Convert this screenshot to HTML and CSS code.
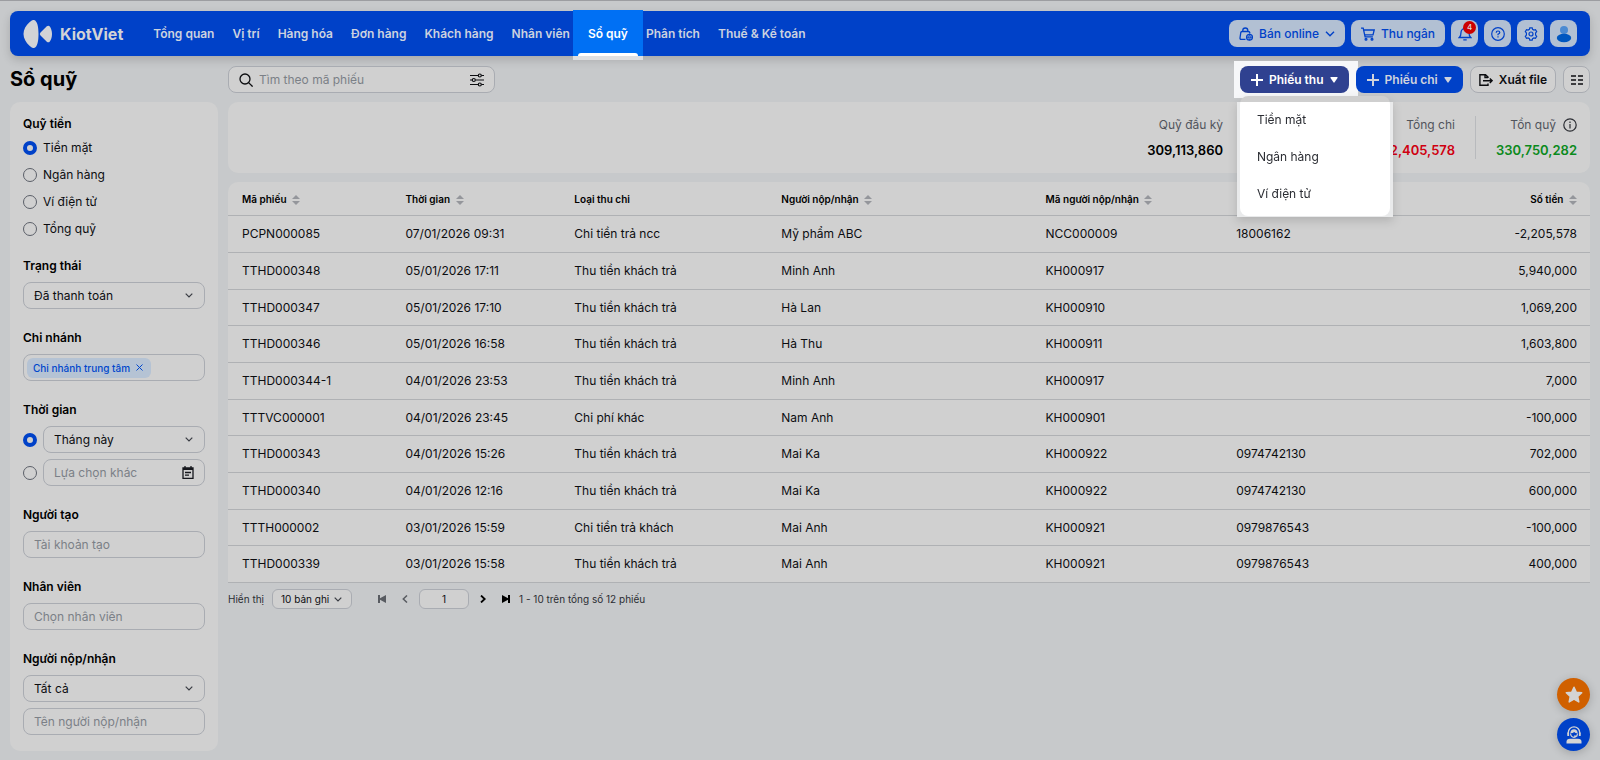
FILE: index.html
```html
<!DOCTYPE html>
<html lang="vi">
<head>
  <meta charset="UTF-8" />
  <meta name="viewport" content="width=device-width, initial-scale=1.0" />
  <title>KiotViet - Sổ quỹ</title>
  <link rel="stylesheet" href="styles.css">
</head>
<body>
  <!-- Shared icons -->
  <svg class="sprite" aria-hidden="true">
    <symbol id="sort" viewBox="0 0 8 12"><path d="M4 1l4 4H0zM4 11l4-4H0z" fill="#94969b"/></symbol>
    <symbol id="plus" viewBox="0 0 12 12"><path d="M6 0v12M0 6h12" fill="none" stroke="currentColor" stroke-width="2"/></symbol>
    <symbol id="caret" viewBox="0 0 8 6"><path d="M1 0h6q1 0 .5 1L4.600 5.300q-.6.7-1.200 0L.5 1Q0 0 1 0z" fill="currentColor"/></symbol>
  </svg>

  <header class="navbar">
    <a class="logo" href="#">
      <svg width="30" height="28" viewBox="0 0 30 28" fill="currentColor">
        <path d="M11 0c-1.500-.2-3 .8-4.500 2.300C3 5.500.5 9.500.5 14s2.500 8.500 6 11.700C8 27.200 9.500 28.200 11 28c3.500-1 4.500-7 4.500-14S14.500 1 11 0z"/>
        <path d="M17.500 12.500l6.300-6.200c1-.9 2.200-.9 3 .2C28.200 8.500 29 11 29 14s-.8 5.500-2.200 7.500c-.8 1.100-2 1.100-3 .2l-6.300-6.200q-1.500-1.500 0-3z"/>
      </svg>
      <span>KiotViet</span>
    </a>
    <nav class="menu">
      <a href="#">Tổng quan</a>
      <a href="#">Vị trí</a>
      <a href="#">Hàng hóa</a>
      <a href="#">Đơn hàng</a>
      <a href="#">Khách hàng</a>
      <a href="#">Nhân viên</a>
      <a href="#" class="active"><span>Sổ quỹ</span></a>
      <a href="#">Phân tích</a>
      <a href="#">Thuế &amp; Kế toán</a>
    </nav>
    <div class="nav-actions">
      <button class="nav-btn sell">
        <svg width="14" height="14" viewBox="0 0 14 14" fill="none" stroke="currentColor" stroke-width="1.300">
          <path d="M6.500 12.300H2.200Q.8 12.300 1 11l.8-5.500q.2-1 1.200-1h6.500q1 0 1.200 1l.2 1M3.800 4.500V3.500a2.500 2.500 0 0 1 5 0v1"/>
          <circle cx="10.500" cy="10.300" r="2.900"/><path d="M7.600 10.300h5.800M10.500 7.400q-2 2.900 0 5.800q2-2.900 0-5.800" stroke-width=".8"/>
        </svg>
        <span>Bán online</span>
        <svg width="10" height="6" viewBox="0 0 10 6" fill="none" stroke="currentColor" stroke-width="1.400"><path d="M1 .8l4 4 4-4"/></svg>
      </button>
      <button class="nav-btn cashier">
        <svg width="14" height="14" viewBox="0 0 14 14" fill="none" stroke="currentColor" stroke-width="1.300">
          <path d="M0 1.200h2.200l1.900 8.600h7.800M2.700 3h10.500l-1.200 4.800H3.700"/>
          <circle cx="5" cy="12.300" r=".9"/><circle cx="11" cy="12.300" r=".9"/>
        </svg>
        <span>Thu ngân</span>
      </button>
      <button class="nav-btn square" aria-label="Thông báo">
        <svg width="14" height="14" viewBox="0 0 14 14" fill="none" stroke="currentColor" stroke-width="1.300">
          <path d="M1.300 10.500h11.400Q11 9 11 5.500a4 4 0 0 0-8 0Q3 9 1.300 10.500zM5.300 12.800h3.400"/>
        </svg>
        <span class="badge">4</span>
      </button>
      <button class="nav-btn square" aria-label="Trợ giúp">
        <svg width="14" height="14" viewBox="0 0 14 14" fill="none" stroke="currentColor" stroke-width="1.200">
          <circle cx="7" cy="7" r="6.300"/><path d="M5.200 5.700Q5.200 4 7 4t1.800 1.500Q8.800 6.500 7 7.200v1M7 9.200v1.300"/>
        </svg>
      </button>
      <button class="nav-btn square" aria-label="Thiết lập">
        <svg width="14" height="14" viewBox="0 0 14 14" fill="none" stroke="currentColor" stroke-width="1.200">
          <path d="M5.800.8h2.400l.4 1.600 1.300.7 1.600-.4 1.200 2-1.100 1.200v2.200l1.100 1.200-1.200 2-1.600-.4-1.300.7-.4 1.600H5.800l-.4-1.600-1.300-.7-1.600.4-1.200-2 1.100-1.200V5.900L1.300 4.700l1.200-2 1.600.4 1.300-.7z"/>
          <circle cx="7" cy="7" r="2"/>
        </svg>
      </button>
      <button class="nav-btn square" aria-label="Tài khoản">
        <svg width="16" height="18" viewBox="0 0 16 18"><circle cx="8" cy="5" r="4" fill="#4b8ad2"/><ellipse cx="8" cy="13" rx="7.200" ry="4.200" fill="#0057c0"/></svg>
      </button>
    </div>
  </header>

  <div class="page">
    <h1>Sổ quỹ</h1>

    <div class="toolbar">
      <div class="search">
        <svg width="14" height="14" viewBox="0 0 14 14" fill="none" stroke="currentColor" stroke-width="1.300"><circle cx="6" cy="6" r="5"/><path d="M9.600 9.600l4 4"/></svg>
        <input type="text" placeholder="Tìm theo mã phiếu" aria-label="Tìm theo mã phiếu">
        <button class="icon-btn" aria-label="Bộ lọc">
          <svg width="14" height="14" viewBox="0 0 14 14" fill="none" stroke="currentColor" stroke-width="1.200">
            <path d="M0 2.500h8M11.500 2.500H14M0 7h2M5.500 7H14M0 11.500h8M11.500 11.500H14"/>
            <circle cx="9.800" cy="2.500" r="1.500"/><circle cx="3.800" cy="7" r="1.500"/><circle cx="9.800" cy="11.500" r="1.500"/>
          </svg>
        </button>
      </div>
      <div class="actions">
        <div class="receipt">
          <button class="btn receipt-btn">
            <svg width="12" height="12"><use href="#plus"/></svg>
            <span>Phiếu thu</span>
            <svg width="8" height="6"><use href="#caret"/></svg>
          </button>
          <div class="dropdown">
            <ul>
              <li><a href="#">Tiền mặt</a></li>
              <li><a href="#">Ngân hàng</a></li>
              <li><a href="#">Ví điện tử</a></li>
            </ul>
          </div>
        </div>
        <button class="btn payment-btn">
          <svg width="12" height="12"><use href="#plus"/></svg>
          <span>Phiếu chi</span>
          <svg width="8" height="6"><use href="#caret"/></svg>
        </button>
        <button class="btn outline">
          <svg width="14" height="12" viewBox="0 0 14 12" fill="none" stroke="currentColor" stroke-width="1.400">
            <path d="M9 4V3L6.500.7H.9v10.600H9V9.500M6 .7V3.500h3M4 6.700h9M10.800 4.400l2.300 2.300L10.800 9"/>
          </svg>
          <span>Xuất file</span>
        </button>
        <button class="btn outline columns" aria-label="Hiển thị cột">
          <svg width="12" height="10" viewBox="0 0 12 10" stroke="currentColor" stroke-width="1.400"><path d="M0 1h5M7 1h5M0 5h5M7 5h5M0 9h5M7 9h5"/></svg>
        </button>
      </div>
    </div>

    <aside class="filters">
      <section>
        <h2>Quỹ tiền</h2>
        <div class="radio-list">
          <label><input type="radio" name="fund" checked> Tiền mặt</label>
          <label><input type="radio" name="fund"> Ngân hàng</label>
          <label><input type="radio" name="fund"> Ví điện tử</label>
          <label><input type="radio" name="fund"> Tổng quỹ</label>
        </div>
      </section>
      <section>
        <h2><label for="status">Trạng thái</label></h2>
        <select id="status" class="field"><option>Đã thanh toán</option></select>
      </section>
      <section>
        <h2>Chi nhánh</h2>
        <div class="field tags">
          <span class="tag">Chi nhánh trung tâm
            <button class="icon-btn" aria-label="Bỏ chi nhánh"><svg width="7" height="7" viewBox="0 0 7 7" stroke="currentColor"><path d="M.5.5l6 6M6.500.5l-6 6"/></svg></button>
          </span>
        </div>
      </section>
      <section>
        <h2>Thời gian</h2>
        <div class="time-row">
          <input type="radio" name="time" aria-label="Theo tháng" checked>
          <select class="field" aria-label="Khoảng thời gian"><option>Tháng này</option></select>
        </div>
        <div class="time-row">
          <input type="radio" name="time" aria-label="Lựa chọn khác">
          <input type="text" class="field date" placeholder="Lựa chọn khác" aria-label="Lựa chọn khác">
        </div>
      </section>
      <section>
        <h2><label for="creator">Người tạo</label></h2>
        <input type="text" id="creator" class="field" placeholder="Tài khoản tạo">
      </section>
      <section>
        <h2><label for="staff">Nhân viên</label></h2>
        <input type="text" id="staff" class="field" placeholder="Chọn nhân viên">
      </section>
      <section>
        <h2><label for="payer">Người nộp/nhận</label></h2>
        <select id="payer" class="field"><option>Tất cả</option></select>
        <input type="text" class="field" placeholder="Tên người nộp/nhận" aria-label="Tên người nộp/nhận">
      </section>
    </aside>

    <main>
      <div class="summary">
        <div class="total opening"><span>Quỹ đầu kỳ</span><strong>309,113,860</strong></div>
        <div class="total"><span>Tổng chi</span><strong class="red">-2,405,578</strong></div>
        <div class="total">
          <span>Tồn quỹ
            <svg width="14" height="14" viewBox="0 0 14 14" fill="none" stroke="#2b2d33" stroke-width="1.200"><circle cx="7" cy="7" r="6.200"/><path d="M7 6v4.500M7 3.500V5"/></svg>
          </span>
          <strong class="green">330,750,282</strong>
        </div>
      </div>

      <table>
        <colgroup>
          <col class="c-code"><col class="c-time"><col class="c-type"><col class="c-name"><col class="c-id"><col>
          <col class="c-amount">
        </colgroup>
        <thead>
          <tr>
            <th>Mã phiếu <svg width="8" height="12"><use href="#sort"/></svg></th>
            <th>Thời gian <svg width="8" height="12"><use href="#sort"/></svg></th>
            <th>Loại thu chi</th>
            <th>Người nộp/nhận <svg width="8" height="12"><use href="#sort"/></svg></th>
            <th>Mã người nộp/nhận <svg width="8" height="12"><use href="#sort"/></svg></th>
            <th aria-label="Số điện thoại"></th>
            <th class="num">Số tiền <svg width="8" height="12"><use href="#sort"/></svg></th>
          </tr>
        </thead>
        <tbody>
          <tr><td>PCPN000085</td><td>07/01/2026 09:31</td><td>Chi tiền trả ncc</td><td>Mỹ phẩm ABC</td><td>NCC000009</td><td>18006162</td><td class="num">-2,205,578</td></tr>
          <tr><td>TTHD000348</td><td>05/01/2026 17:11</td><td>Thu tiền khách trả</td><td>Minh Anh</td><td>KH000917</td><td></td><td class="num">5,940,000</td></tr>
          <tr><td>TTHD000347</td><td>05/01/2026 17:10</td><td>Thu tiền khách trả</td><td>Hà Lan</td><td>KH000910</td><td></td><td class="num">1,069,200</td></tr>
          <tr><td>TTHD000346</td><td>05/01/2026 16:58</td><td>Thu tiền khách trả</td><td>Hà Thu</td><td>KH000911</td><td></td><td class="num">1,603,800</td></tr>
          <tr><td>TTHD000344-1</td><td>04/01/2026 23:53</td><td>Thu tiền khách trả</td><td>Minh Anh</td><td>KH000917</td><td></td><td class="num">7,000</td></tr>
          <tr><td>TTTVC000001</td><td>04/01/2026 23:45</td><td>Chi phí khác</td><td>Nam Anh</td><td>KH000901</td><td></td><td class="num">-100,000</td></tr>
          <tr><td>TTHD000343</td><td>04/01/2026 15:26</td><td>Thu tiền khách trả</td><td>Mai Ka</td><td>KH000922</td><td>0974742130</td><td class="num">702,000</td></tr>
          <tr><td>TTHD000340</td><td>04/01/2026 12:16</td><td>Thu tiền khách trả</td><td>Mai Ka</td><td>KH000922</td><td>0974742130</td><td class="num">600,000</td></tr>
          <tr><td>TTTH000002</td><td>03/01/2026 15:59</td><td>Chi tiền trả khách</td><td>Mai Anh</td><td>KH000921</td><td>0979876543</td><td class="num">-100,000</td></tr>
          <tr><td>TTHD000339</td><td>03/01/2026 15:58</td><td>Thu tiền khách trả</td><td>Mai Anh</td><td>KH000921</td><td>0979876543</td><td class="num">400,000</td></tr>
        </tbody>
      </table>

      <div class="pager">
        <label for="page-size">Hiển thị</label>
        <select id="page-size"><option>10 bản ghi</option></select>
        <div class="pages">
          <button class="icon-btn muted" aria-label="Trang đầu"><svg width="8" height="8" viewBox="0 0 8 8" fill="currentColor"><path d="M0 0h2v3.200L8 0v8L2 4.800V8H0z"/></svg></button>
          <button class="icon-btn muted" aria-label="Trang trước"><svg width="8" height="8" viewBox="0 0 8 8" fill="none" stroke="currentColor" stroke-width="1.500"><path d="M6 .5L2.300 4 6 7.500"/></svg></button>
          <input type="text" value="1" aria-label="Trang">
          <button class="icon-btn" aria-label="Trang sau"><svg width="8" height="8" viewBox="0 0 8 8" fill="none" stroke="currentColor" stroke-width="1.800"><path d="M2 .5L5.700 4 2 7.500"/></svg></button>
          <button class="icon-btn" aria-label="Trang cuối"><svg width="8" height="8" viewBox="0 0 8 8" fill="currentColor"><path d="M8 0H6v3.200L0 0v8l6-3.200V8h2z"/></svg></button>
        </div>
        <span>1 - 10 trên tổng số 12 phiếu</span>
      </div>
    </main>
  </div>

  <div class="floating">
    <button class="star" aria-label="Đánh giá">
      <svg width="18" height="18" viewBox="0 0 18 18" fill="#d4d4d4" stroke="#d4d4d4" stroke-width="1.500" stroke-linejoin="round"><path d="M9 1.200l2.300 5 5.400.6-4 3.700 1.100 5.400L9 13.200l-4.800 2.700 1.100-5.400-4-3.700 5.400-.6z"/></svg>
    </button>
    <button class="support" aria-label="Hỗ trợ">
      <svg width="16" height="18" viewBox="0 0 16 18">
        <path d="M.5 17.500v-1.700q0-3 3.500-3h8q3.500 0 3.500 3v1.700z" fill="#d4d4d4"/>
        <path d="M2.300 8.500V6.500a5.700 5.700 0 0 1 11.400 0v2" fill="none" stroke="#d4d4d4" stroke-width="1.300"/>
        <path d="M1.300 6.500h1.800v3.500H1.300zM12.900 6.500h1.800v3.500h-1.800z" fill="#d4d4d4"/>
        <path d="M4.300 7.200Q4.600 3.300 8 3.300t3.700 3.900q-2 .3-3.500-1.200Q6.800 7.300 4.300 7.200z" fill="#d4d4d4"/>
        <path d="M4.500 7.500Q5 11.300 8 11.300t3.500-3.800M8 10h3.500" fill="none" stroke="#d4d4d4" stroke-width="1.200"/>
      </svg>
    </button>
  </div>
</body>
</html>
```
FILE: styles.css
```css
* {
  box-sizing: border-box;
}
body {
  font-family: Inter, "Noto Sans", sans-serif;
  font-size: 12px;
  line-height: 16px;
  margin: 0;
  padding: 10px 10px 0;
  min-height: 100vh;
  border-top: 1px solid #9c9da1;
  background: #c7c9cb;
  color: #0c0d10;
}
a {
  color: inherit;
  text-decoration: none;
}
button, input, select {
  font: inherit;
  color: inherit;
  margin: 0;
}
button {
  cursor: pointer;
}
svg {
  flex: none;
}
h1, h2, ul {
  margin: 0;
  padding: 0;
}
.sprite {
  position: absolute;
  width: 0;
  height: 0;
}

/* Top bar */
.navbar {
  display: flex;
  align-items: center;
  height: 45px;
  padding: 0 13px;
  border-radius: 8px;
  background: #0041c8;
  color: #ccd2df;
  box-shadow: 0 4px 10px rgba(0, 0, 0, 0.16);
}
.logo {
  display: flex;
  align-items: center;
  gap: 7px;
  color: #d2d3d6;
  font-size: 16px;
  font-weight: 700;
}
.menu {
  display: flex;
  align-self: stretch;
  gap: 18px;
  margin-left: 30px;
  font-weight: 600;
}
.menu a {
  display: flex;
  align-items: center;
  white-space: nowrap;
}
.menu .active {
  position: relative;
  color: #fff;
}
.menu .active span {
  position: relative;
}
/* lit area behind the current tab */
.menu .active::before {
  content: "";
  position: absolute;
  inset: -1px -15px -4px;
  background: linear-gradient(#0070f4 46px, #dedfe1 46px);
}
.menu .active::after {
  content: "";
  position: absolute;
  left: -10px;
  right: -10px;
  bottom: 0;
  height: 3px;
  border-radius: 3px 3px 0 0;
  background: #fff;
}
.nav-actions {
  display: flex;
  gap: 6px;
  margin-left: auto;
}
.nav-btn {
  position: relative;
  display: flex;
  align-items: center;
  justify-content: center;
  gap: 6px;
  height: 27px;
  padding: 0;
  border: none;
  border-radius: 8px;
  background: #b2c0d3;
  color: #0041c8;
  font-weight: 500;
}
.sell {
  width: 116px;
}
.cashier {
  width: 94px;
}
.square {
  width: 27px;
}
.badge {
  position: absolute;
  top: 1px;
  right: 2px;
  width: 13px;
  height: 13px;
  border-radius: 50%;
  background: #cc0000;
  color: #ddd;
  font-size: 8px;
  line-height: 13px;
}

/* Page grid */
.page {
  display: grid;
  grid-template-columns: 208px 1fr;
  column-gap: 10px;
  row-gap: 9px;
  align-items: start;
  padding-top: 10px;
}
h1 {
  font-size: 20px;
  line-height: 27px;
  font-weight: 700;
  color: #000;
}
.toolbar {
  display: flex;
  justify-content: space-between;
}
.search {
  display: flex;
  align-items: center;
  gap: 6px;
  width: 267px;
  height: 27px;
  padding: 0 10px;
  border: 1px solid #a9acb2;
  border-radius: 8px;
  background: #d0d0d0;
}
.search input {
  flex: 1;
  min-width: 0;
  padding: 0;
  border: none;
  outline: none;
  background: none;
}
::placeholder {
  color: #7b8087;
  opacity: 1;
}
.icon-btn {
  display: inline-flex;
  padding: 0;
  border: none;
  background: none;
}
.actions {
  display: flex;
  gap: 7px;
}
.btn {
  position: relative;
  display: flex;
  align-items: center;
  justify-content: center;
  gap: 6px;
  height: 27px;
  padding: 0 11px;
  border: none;
  border-radius: 8px;
  font-weight: 600;
  white-space: nowrap;
}
.receipt-btn {
  background: #2f4190;
  color: #fff;
}
.payment-btn {
  background: #0041c8;
  color: #d0d3dc;
}
.outline {
  padding: 0 8px;
  border: 1px solid #a9acb2;
  background: #d0d0d0;
}
.columns {
  width: 27px;
  padding: 0;
}

/* "Phiếu thu" button with its open menu */
.receipt {
  position: relative;
}
.receipt::before {
  content: "";
  position: absolute;
  inset: -5px -9px -5px -6px;
  background: #f6f7f9;
}
.dropdown {
  position: absolute;
  top: 30px;
  left: 0;
  z-index: 2;
  width: 150px;
  filter: drop-shadow(0 4px 5px rgba(0, 0, 0, 0.14));
}
.dropdown::before {
  content: "";
  position: absolute;
  inset: 6px -3px -1px;
  background: #e9eaeb;
}
.dropdown ul {
  position: relative;
  padding: 5px 0 4px;
  border-radius: 8px;
  background: linear-gradient(#cfcfcf 6px, #fff 6px);
  list-style: none;
}
.dropdown a {
  display: block;
  padding: 0 17px;
  line-height: 37px;
  color: #2b2d33;
}

/* Filters */
.filters {
  display: flex;
  flex-direction: column;
  gap: 19px;
  padding: 12px 13px 16px;
  border-radius: 10px;
  background: #d0d0d0;
}
h2 {
  margin-bottom: 6px;
  font-size: 12px;
  line-height: 20px;
  font-weight: 600;
  color: #000;
}
.radio-list {
  display: flex;
  flex-direction: column;
  gap: 11px;
}
.radio-list label {
  display: flex;
  align-items: center;
  gap: 6px;
  height: 16px;
}
input[type="radio"] {
  flex: none;
  appearance: none;
  width: 14px;
  height: 14px;
  border: 1px solid #5b5f68;
  border-radius: 50%;
}
input[type="radio"]:checked {
  border: 4px solid #0041c8;
}
.field {
  display: block;
  width: 100%;
  height: 27px;
  padding: 0 10px;
  border: 1px solid #a9acb2;
  border-radius: 8px;
  outline: none;
  background: #d0d0d0;
}
.field + .field,
.time-row + .time-row {
  margin-top: 6px;
}
select {
  appearance: none;
}
select.field {
  background: #d0d0d0 url("data:image/svg+xml,%3Csvg xmlns='http://www.w3.org/2000/svg' width='8' height='5'%3E%3Cpath d='M.7.7L4 4 7.300.7' fill='none' stroke='%233a3d44' stroke-width='1.200'/%3E%3C/svg%3E") no-repeat right 11px center;
}
.tags {
  display: flex;
  align-items: center;
  padding: 0 3px;
}
.tag {
  display: flex;
  align-items: center;
  gap: 6px;
  height: 20px;
  padding: 0 8px 0 6px;
  border-radius: 6px;
  background: #b5c3d4;
  color: #0047cc;
  font-size: 10px;
  font-weight: 500;
}
.time-row {
  display: flex;
  align-items: center;
  gap: 6px;
}
.date {
  background: #d0d0d0 url("data:image/svg+xml,%3Csvg xmlns='http://www.w3.org/2000/svg' width='12' height='13' fill='none' stroke='%2315171c' stroke-width='1.300'%3E%3Cpath d='M1 2h10v10.300H1zM3 0v2M9 0v2M3 6.500h6M3 9.200h4'/%3E%3Cpath d='M1 3h10' stroke-width='2'/%3E%3C/svg%3E") no-repeat right 10px center;
}

/* Totals */
.summary {
  display: flex;
  justify-content: flex-end;
  align-items: center;
  height: 71px;
  margin-bottom: 9px;
  padding-right: 13px;
  border-radius: 10px;
  background: #d0d0d0;
}
.total {
  display: flex;
  flex-direction: column;
  align-items: flex-end;
  gap: 9px;
  height: 43px;
  padding: 1px 20px;
  color: #50545c;
}
.total + .total {
  border-left: 1px solid #b8babd;
}
.opening {
  margin-right: 120px;
}
.total:last-child {
  padding-right: 0;
}
.total span {
  display: flex;
  align-items: center;
  gap: 7px;
}
.total strong {
  font-size: 13px;
  font-weight: 600;
  color: #000;
}
.total .red {
  color: #cf0010;
}
.total .green {
  color: #0b8a1c;
}

/* Table */
table {
  width: 100%;
  table-layout: fixed;
  border-spacing: 0;
  border-radius: 10px 10px 0 0;
  background: #d0d0d0;
}
.c-code {
  width: 12%;
}
.c-time {
  width: 12.4%;
}
.c-type {
  width: 15.2%;
}
.c-name {
  width: 19.4%;
}
.c-id {
  width: 14%;
}
.c-amount {
  width: 10%;
}
th, td {
  height: 37px;
  padding: 0 13px 0 14px;
  border-bottom: 1px solid #afb1b4;
  text-align: left;
  white-space: nowrap;
}
tbody tr:nth-child(3n) td {
  height: 36px;
}
th {
  height: 34px;
  font-size: 10px;
  font-weight: 600;
  color: #000;
}
th svg {
  margin-left: 3px;
  vertical-align: middle;
}
.num {
  text-align: right;
}

/* Pager */
.pager {
  display: flex;
  align-items: center;
  gap: 8px;
  margin-top: 6px;
  font-size: 10px;
  color: #2b2d33;
}
.pager select,
.pager input {
  height: 20px;
  border: 1px solid #a9acb2;
  border-radius: 6px;
  background: #d0d0d0;
  color: #0c0d10;
}
.pager select {
  width: 80px;
  padding: 0 8px;
  background: #d0d0d0 url("data:image/svg+xml,%3Csvg xmlns='http://www.w3.org/2000/svg' width='8' height='5'%3E%3Cpath d='M.7.7L4 4 7.300.7' fill='none' stroke='%233a3d44' stroke-width='1.200'/%3E%3C/svg%3E") no-repeat right 9px center;
}
.pages {
  display: flex;
  align-items: center;
  gap: 15px;
  margin: 0 1px 0 18px;
  color: #000;
}
.pages input {
  width: 50px;
  margin: 0 -5px;
  padding: 0;
  text-align: center;
}
.muted {
  color: #585b61;
}

/* Floating buttons */
.floating {
  position: fixed;
  right: 10px;
  bottom: 9px;
  display: flex;
  flex-direction: column;
  gap: 7px;
}
.floating button {
  display: flex;
  align-items: center;
  justify-content: center;
  width: 33px;
  height: 33px;
  padding: 0;
  border: none;
  border-radius: 50%;
  box-shadow: 0 2px 10px rgba(0, 0, 0, 0.2);
}
.star {
  background: #d06000;
}
.support {
  background: #0041c8;
}
```
